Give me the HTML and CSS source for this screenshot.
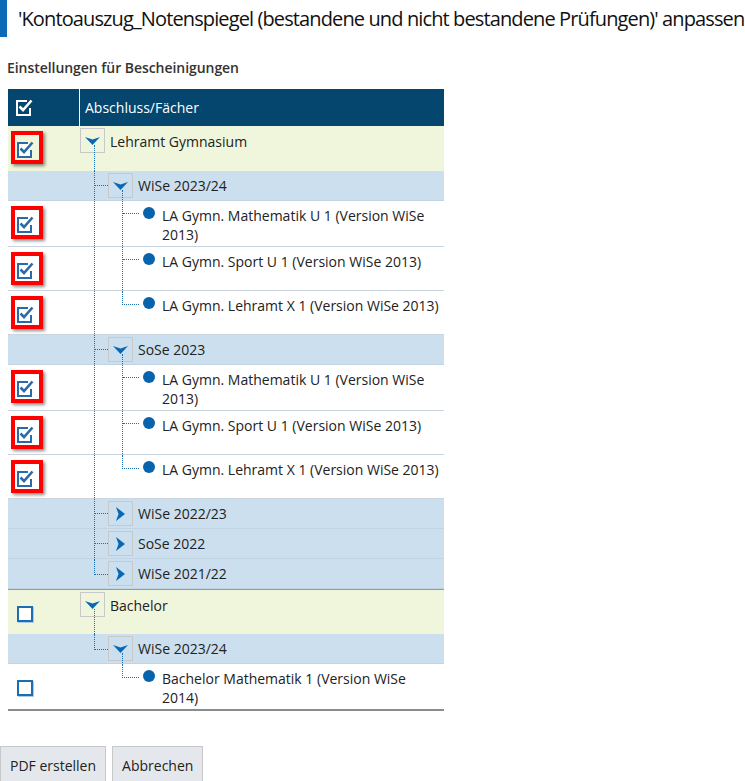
FILE: index.html
```html
<!DOCTYPE html>
<html lang="de">
<head>
<meta charset="utf-8">
<title>Kontoauszug anpassen</title>
<link rel="stylesheet" href="styles.css">
</head>
<body>
<h1 class="title">'Kontoauszug_Notenspiegel (bestandene und nicht bestandene Prüfungen)' anpassen</h1>
<h2 class="section">Einstellungen für Bescheinigungen</h2>

<div class="tree">
  <div class="row head">
    <div class="cb"><svg class="chk" width="18" height="18" viewBox="0 0 18 18"><path d="M12 2H2v14h13V9" fill="none" stroke="#fff" stroke-width="2"/><path d="M4.5 7.5l3.5 3.5 8.5-9.5" fill="none" stroke="#fff" stroke-width="2.6"/></svg></div>
    <div class="name">Abschluss/Fächer</div>
  </div>

  <!-- Lehramt Gymnasium -->
  <div class="row l0 first">
    <div class="cb"><span class="mark"><svg class="chk" width="18" height="18" viewBox="0 0 18 18"><path d="M12 2H2v14h13V9" fill="#fff" stroke="#2a6aa8" stroke-width="2"/><path d="M4.5 7.5l3.5 3.5 8.5-9.5" fill="none" stroke="#2a6aa8" stroke-width="2.6"/></svg></span></div>
    <div class="node">
      <div class="tg"><span class="box"><svg width="15" height="8" viewBox="0 0 15 8"><path d="M0 0l7.5 2.5L15 0 7.5 8z" fill="#0a68b2"/></svg></span><span class="stem"></span></div>
      <span class="lbl">Lehramt Gymnasium</span>
    </div>
  </div>

  <div class="row l1">
    <div class="cb"></div>
    <div class="node">
      <span class="g"><span class="v"><span class="h"></span></span></span>
      <div class="tg"><span class="box"><svg width="15" height="8" viewBox="0 0 15 8"><path d="M0 0l7.5 2.5L15 0 7.5 8z" fill="#0a68b2"/></svg></span><span class="stem"></span></div>
      <span class="lbl">WiSe 2023/24</span>
    </div>
  </div>

  <div class="row leaf">
    <div class="cb"><span class="mark"><svg class="chk" width="18" height="18" viewBox="0 0 18 18"><path d="M12 2H2v14h13V9" fill="#fff" stroke="#2a6aa8" stroke-width="2"/><path d="M4.5 7.5l3.5 3.5 8.5-9.5" fill="none" stroke="#2a6aa8" stroke-width="2.6"/></svg></span></div>
    <div class="node">
      <span class="g"><span class="v"></span></span>
      <span class="g g2"><span class="v"><span class="h"></span></span></span>
      <span class="dot"></span>
      <span class="txt">LA Gymn. Mathematik U 1 (Version WiSe 2013)</span>
    </div>
  </div>

  <div class="row leaf">
    <div class="cb"><span class="mark"><svg class="chk" width="18" height="18" viewBox="0 0 18 18"><path d="M12 2H2v14h13V9" fill="#fff" stroke="#2a6aa8" stroke-width="2"/><path d="M4.5 7.5l3.5 3.5 8.5-9.5" fill="none" stroke="#2a6aa8" stroke-width="2.6"/></svg></span></div>
    <div class="node">
      <span class="g"><span class="v"></span></span>
      <span class="g g2"><span class="v"><span class="h"></span></span></span>
      <span class="dot"></span>
      <span class="txt">LA Gymn. Sport U 1 (Version WiSe 2013)</span>
    </div>
  </div>

  <div class="row leaf">
    <div class="cb"><span class="mark"><svg class="chk" width="18" height="18" viewBox="0 0 18 18"><path d="M12 2H2v14h13V9" fill="#fff" stroke="#2a6aa8" stroke-width="2"/><path d="M4.5 7.5l3.5 3.5 8.5-9.5" fill="none" stroke="#2a6aa8" stroke-width="2.6"/></svg></span></div>
    <div class="node">
      <span class="g"><span class="v"></span></span>
      <span class="g g2"><span class="v last"></span></span>
      <span class="dot"></span>
      <span class="txt">LA Gymn. Lehramt X 1 (Version WiSe 2013)</span>
    </div>
  </div>

  <div class="row l1">
    <div class="cb"></div>
    <div class="node">
      <span class="g"><span class="v"><span class="h"></span></span></span>
      <div class="tg"><span class="box"><svg width="15" height="8" viewBox="0 0 15 8"><path d="M0 0l7.5 2.5L15 0 7.5 8z" fill="#0a68b2"/></svg></span><span class="stem"></span></div>
      <span class="lbl">SoSe 2023</span>
    </div>
  </div>

  <div class="row leaf">
    <div class="cb"><span class="mark"><svg class="chk" width="18" height="18" viewBox="0 0 18 18"><path d="M12 2H2v14h13V9" fill="#fff" stroke="#2a6aa8" stroke-width="2"/><path d="M4.5 7.5l3.5 3.5 8.5-9.5" fill="none" stroke="#2a6aa8" stroke-width="2.6"/></svg></span></div>
    <div class="node">
      <span class="g"><span class="v"></span></span>
      <span class="g g2"><span class="v"><span class="h"></span></span></span>
      <span class="dot"></span>
      <span class="txt">LA Gymn. Mathematik U 1 (Version WiSe 2013)</span>
    </div>
  </div>

  <div class="row leaf">
    <div class="cb"><span class="mark"><svg class="chk" width="18" height="18" viewBox="0 0 18 18"><path d="M12 2H2v14h13V9" fill="#fff" stroke="#2a6aa8" stroke-width="2"/><path d="M4.5 7.5l3.5 3.5 8.5-9.5" fill="none" stroke="#2a6aa8" stroke-width="2.6"/></svg></span></div>
    <div class="node">
      <span class="g"><span class="v"></span></span>
      <span class="g g2"><span class="v"><span class="h"></span></span></span>
      <span class="dot"></span>
      <span class="txt">LA Gymn. Sport U 1 (Version WiSe 2013)</span>
    </div>
  </div>

  <div class="row leaf">
    <div class="cb"><span class="mark"><svg class="chk" width="18" height="18" viewBox="0 0 18 18"><path d="M12 2H2v14h13V9" fill="#fff" stroke="#2a6aa8" stroke-width="2"/><path d="M4.5 7.5l3.5 3.5 8.5-9.5" fill="none" stroke="#2a6aa8" stroke-width="2.6"/></svg></span></div>
    <div class="node">
      <span class="g"><span class="v"></span></span>
      <span class="g g2"><span class="v last"></span></span>
      <span class="dot"></span>
      <span class="txt">LA Gymn. Lehramt X 1 (Version WiSe 2013)</span>
    </div>
  </div>

  <div class="row l1 closed">
    <div class="cb"></div>
    <div class="node">
      <span class="g"><span class="v"><span class="h"></span></span></span>
      <div class="tg"><span class="box"><svg width="9" height="14" viewBox="0 0 9 14"><path d="M0 0l9 7-9 7 2.5-7z" fill="#0a68b2"/></svg></span></div>
      <span class="lbl">WiSe 2022/23</span>
    </div>
  </div>

  <div class="row l1 closed">
    <div class="cb"></div>
    <div class="node">
      <span class="g"><span class="v"><span class="h"></span></span></span>
      <div class="tg"><span class="box"><svg width="9" height="14" viewBox="0 0 9 14"><path d="M0 0l9 7-9 7 2.5-7z" fill="#0a68b2"/></svg></span></div>
      <span class="lbl">SoSe 2022</span>
    </div>
  </div>

  <div class="row l1 closed">
    <div class="cb"></div>
    <div class="node">
      <span class="g"><span class="v last"></span></span>
      <div class="tg"><span class="box"><svg width="9" height="14" viewBox="0 0 9 14"><path d="M0 0l9 7-9 7 2.5-7z" fill="#0a68b2"/></svg></span></div>
      <span class="lbl">WiSe 2021/22</span>
    </div>
  </div>

  <!-- Bachelor -->
  <div class="row l0 group">
    <div class="cb"><span class="box-off"></span></div>
    <div class="node">
      <div class="tg"><span class="box"><svg width="15" height="8" viewBox="0 0 15 8"><path d="M0 0l7.5 2.5L15 0 7.5 8z" fill="#0a68b2"/></svg></span><span class="stem"></span></div>
      <span class="lbl">Bachelor</span>
    </div>
  </div>

  <div class="row l1">
    <div class="cb"></div>
    <div class="node">
      <span class="g"><span class="v last"></span></span>
      <div class="tg"><span class="box"><svg width="15" height="8" viewBox="0 0 15 8"><path d="M0 0l7.5 2.5L15 0 7.5 8z" fill="#0a68b2"/></svg></span><span class="stem"></span></div>
      <span class="lbl">WiSe 2023/24</span>
    </div>
  </div>

  <div class="row leaf end">
    <div class="cb"><span class="box-off"></span></div>
    <div class="node">
      <span class="g"></span>
      <span class="g g2"><span class="v last"></span></span>
      <span class="dot"></span>
      <span class="txt">Bachelor Mathematik 1 (Version WiSe 2014)</span>
    </div>
  </div>
</div>

<div class="actions">
  <button class="btn" type="button">PDF erstellen</button>
  <button class="btn" type="button">Abbrechen</button>
</div>
</body>
</html>
```

FILE: styles.css
```css
* { box-sizing: border-box; }
html, body { margin: 0; padding: 0; background: #fff; }
body {
  font-family: "Open Sans", "Noto Sans", sans-serif;
  font-size: 14px;
  color: #222;
}

.title {
  margin: 0;
  height: 37px;
  line-height: 37px;
  border-left: 7px solid #0b6bb6;
  padding-left: 11px;
  font-size: 20px;
  font-weight: 400;
  letter-spacing: -0.88px;
  color: #111;
  white-space: nowrap;
}

.section {
  margin: 22px 0 12px 7px;
  font-size: 14px;
  line-height: 18px;
  font-weight: 600;
  letter-spacing: -0.05px;
  color: #333;
}

.tree {
  margin-left: 8px;
  width: 436px;
  border-bottom: 2px solid #8c8c8c;
}

.row {
  display: grid;
  grid-template-columns: 72px 1fr;
}

.row.head {
  background: #04466e;
  height: 37px;
  color: #fff;
}
.row.head .cb {
  border-right: 1px solid #fff;
  padding: 0 0 0 7px;
  display: flex;
  align-items: center;
}
.row.head .name {
  padding-left: 5px;
  display: flex;
  align-items: center;
  font-size: 14px;
}

.cb {
  padding: 5px 0 0 3px;
  display: flex;
  align-items: flex-start;
}
.chk { display: block; }

.mark {
  display: block;
  border: 4px solid #ff0000;
  padding: 6px 5px 1px 1px;
  box-shadow: 2px 2px 3px rgba(0, 0, 0, 0.45);
}

.box-off {
  display: block;
  width: 16px;
  height: 16px;
  margin: 11px 0 0 6px;
  border: 2px solid #1d6db0;
  background: #fff;
  box-shadow: 1px 1px 0 #a9cbe6;
}

.l0 { background: #eff6dc; min-height: 45px; }
.l0.group { border-top: 1px solid #9a9a9a; }
.l1 { background: #cbdfee; border-bottom: 1px solid #c0d4e4; }
.leaf { background: #fff; border-bottom: 1px solid #cad5df; min-height: 44px; }
.leaf.end { border-bottom: 0; }

.node {
  display: flex;
  align-items: stretch;
}

.tg {
  flex: none;
  width: 25px;
  display: flex;
  flex-direction: column;
}
.box {
  flex: none;
  width: 25px;
  height: 25px;
  margin: 2px 0 2px;
  border: 1px solid #c8c8c8;
  display: flex;
  align-items: center;
  justify-content: center;
}
.l0 .box { margin-bottom: 0; }
.stem {
  flex: 1;
  margin: -8px 0 0 14px;
  border-left: 1px dotted #1a6eb3;
}
.l1 .stem { margin-top: -8px; margin-bottom: 0; }
.l1 .tg { height: 29px; }
.l1 .box { margin-bottom: 0; }

.lbl {
  margin-left: 5px;
  padding-top: 5px;
  line-height: 19px;
}
.l0 .lbl { padding-top: 6px; }

.g {
  flex: none;
  width: 28px;
  padding-left: 14px;
  display: flex;
  align-items: stretch;
}
.g .v {
  width: 14px;
  border-left: 1px dotted #1a6eb3;
}
.g .h {
  display: block;
  height: 15px;
  border-bottom: 1px dotted #1a6eb3;
}
.g .v.last {
  align-self: flex-start;
  height: 16px;
  border-bottom: 1px dotted #1a6eb3;
}

.g2 { width: 35px; }
.g2 .v { width: 17px; }
.leaf .g .h { height: 13px; }
.leaf .g .v.last { height: 14px; }

.dot {
  flex: none;
  width: 12px;
  height: 12px;
  margin-top: 6px;
  border-radius: 50%;
  background: #0863ad;
}
.txt {
  margin-left: 7px;
  padding: 5px 4px 2px 0;
  line-height: 19px;
}

.actions {
  margin-top: 35px;
  display: flex;
  gap: 6px;
}
.btn {
  font-family: "Open Sans", "Noto Sans", sans-serif;
  font-size: 14px;
  color: #222;
  background: #e4e8ec;
  border: 1px solid #c8c8c8;
  height: 38px;
  padding: 0 9px;
  margin: 0;
  border-radius: 0;
}
```
